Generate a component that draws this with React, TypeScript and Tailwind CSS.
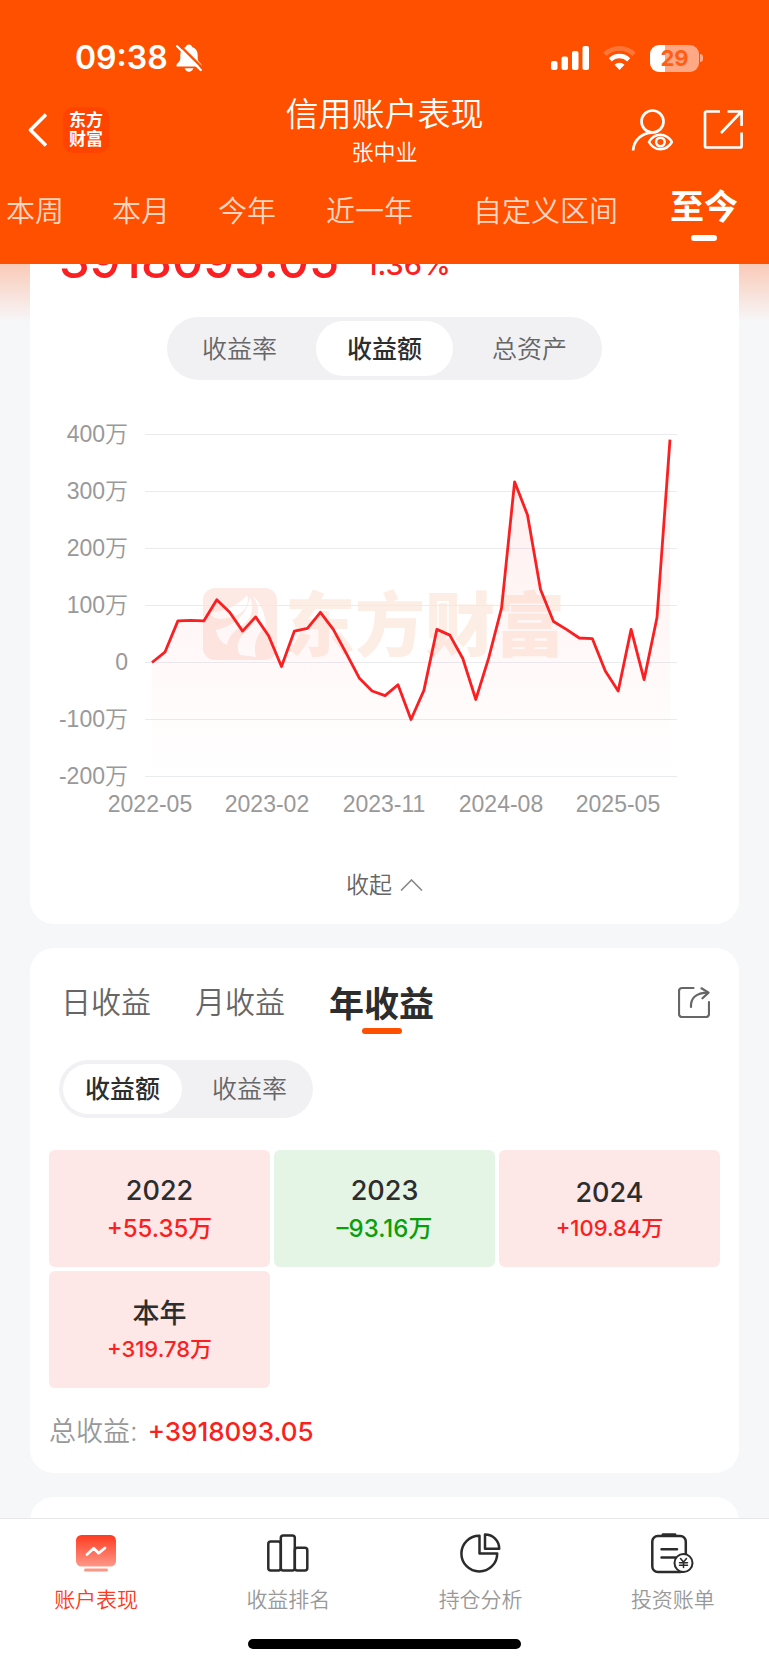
import { useState } from "react";

const PERIODS = [
  { label: "本周", space: "" },
  { label: "本月", space: "" },
  { label: "今年", space: "" },
  { label: "近一年", space: "ml-0.5" },
  { label: "自定义区间", space: "ml-3" },
  { label: "至今", space: "ml-1" },
];

const GRID = [400, 300, 200, 100, 0, -100, -200];
const MONTHS = ["2022-05", "2023-02", "2023-11", "2024-08", "2025-05"];
const SERIES = [
  0, 18, 73, 74, 73, 110, 88, 55, 80, 47, -7, 55, 60, 88, 58, 16, -27, -50, -58, -39, -100, -49, 58, 48, 7, -65, 8,
  96, 317, 259, 128, 72, 58, 43, 42, -15, -50, 58, -30, 79, 391,
];

const YEARS = [
  { year: "2022", value: "+55.35万", size: "text-[24px] leading-[38px]", tone: "bg-[#fde7e7] text-[#fb1f22]" },
  { year: "2023", value: "–93.16万", size: "text-[24px] leading-[38px]", tone: "bg-[#e4f4e5] text-[#0a9f0a]" },
  { year: "2024", value: "+109.84万", size: "text-[22px] leading-[33px]", tone: "bg-[#fde7e7] text-[#fb1f22]" },
  { year: "本年", value: "+319.78万", size: "text-[22px] leading-[33px]", tone: "bg-[#fde7e7] text-[#fb1f22]" },
];

function StatusBar() {
  return (
    <div className="flex h-[92px] items-center justify-between pt-6 pr-[66px] pl-[75px]">
      <div className="flex items-center gap-2">
        <span className="text-[32px] leading-10 font-semibold">09:38</span>
        <svg className="h-7 w-[26px]" viewBox="0 0 26 28" fill="none" aria-hidden="true">
          <path
            d="M13 0.5c-1.6 0-2.9 1-3.3 2.4C6.2 4 4.3 7 4.3 11v3.2c0 1.8-.8 3.2-2.2 4.5C1 19.800 .4 20.600 .4 21.400c0 .8.5 1.200 1.400 1.200h22.400c.9 0 1.400-.4 1.400-1.200 0-.8-.6-1.600-1.700-2.700-1.400-1.300-2.200-2.700-2.200-4.500V11c0-4-1.900-7-5.400-8.100C15.900 1.500 14.600.5 13 .5Z"
            fill="white"
          />
          <path d="M8.700 24.300h8.600c-.6 2.200-2.300 3.400-4.300 3.400s-3.700-1.200-4.300-3.400Z" fill="white" />
          <path d="M2.600 0.200 26.500 24" stroke="#ff5000" strokeWidth="2.400" />
          <path d="M1.100 2.200 24.800 26" stroke="white" strokeWidth="2.200" strokeLinecap="round" />
        </svg>
      </div>
      <div className="flex items-center gap-[14px]">
        <svg className="h-6 w-[38px]" viewBox="0 0 38 24" fill="white" aria-hidden="true">
          <rect x="0" y="15" width="6.500" height="9" rx="2" />
          <rect x="10.500" y="10.500" width="6.500" height="13.500" rx="2" />
          <rect x="21" y="5" width="6.500" height="19" rx="2" />
          <rect x="31.500" y="0" width="6.500" height="24" rx="2" />
        </svg>
        <svg className="h-6 w-[33px]" viewBox="0 0 33 24" fill="none" aria-hidden="true">
          <path d="M1.900 8.300a21 21 0 0 1 29.200 0" stroke="white" strokeOpacity=".22" strokeWidth="4.600" />
          <path d="M7.300 13.800a13.200 13.200 0 0 1 18.400 0" stroke="white" strokeWidth="4.400" />
          <path d="M11.500 18.700a7.300 7.300 0 0 1 10 0L16.500 24Z" fill="white" />
        </svg>
        <div className="flex items-center gap-px">
          <div className="flex h-[27px] w-[49px] items-center justify-center rounded-[9px] bg-[linear-gradient(to_right,white_15px,#ffa885_15px)] text-[22px] font-bold text-[#ff5f14]">
            29
          </div>
          <div className="h-2 w-[3px] rounded-r-full bg-[#ffa885]" />
        </div>
      </div>
    </div>
  );
}

function NavBar() {
  return (
    <div className="grid h-[76px] grid-cols-[1fr_auto_1fr] items-center px-[26px]">
      <div className="flex items-center gap-4">
        <button aria-label="返回">
          <svg className="h-[34px] w-[21px]" viewBox="0 0 21 34" fill="none" stroke="white" strokeWidth="3.600">
            <path d="M20 1.500 4.500 17 20 32.500" strokeLinejoin="round" />
          </svg>
        </button>
        <div className="flex h-[46px] w-[46px] flex-col items-center justify-center rounded-[10px] bg-[#ff4300] text-[17px] leading-[19px] font-bold">
          <span>东方</span>
          <span>财富</span>
        </div>
      </div>
      <div className="text-center">
        <h1 className="text-[33px] leading-[44px] font-[350]">信用账户表现</h1>
        <p className="text-[22px] leading-8 font-[350]">张中业</p>
      </div>
      <div className="flex items-center justify-end gap-[30px]">
        <button aria-label="查看账户">
          <svg className="h-[42px] w-[42px]" viewBox="0 0 42 42" fill="none" stroke="white" strokeWidth="2.700">
            <circle cx="21.500" cy="12.500" r="11" />
            <path d="M21.300 23.700C11 23.700 2.600 31.500 2.100 41.500" />
            <path
              d="M18 33c2.700-4.800 6.500-7.300 11.200-7.300S38.100 28.200 41 33c-2.900 4.800-7.100 7.300-11.800 7.300S20.700 37.800 18 33Z"
              fill="#ff5000"
              strokeWidth="2.500"
            />
            <circle cx="29.400" cy="33" r="4.300" strokeWidth="2.500" />
          </svg>
        </button>
        <button aria-label="分享">
          <svg className="h-[42px] w-[40px]" viewBox="0 0 40 42" fill="none" stroke="white" strokeWidth="2.700">
            <path d="M17 2.500H3.500A1.500 1.500 0 0 0 2 4v33a1.500 1.500 0 0 0 1.500 1.500h33.600a1.500 1.500 0 0 0 1.500-1.500V23.500" />
            <path d="M24.500 2.500h14.100V17M38 3 18 24" />
          </svg>
        </button>
      </div>
    </div>
  );
}

function PeriodTabs() {
  const [active, setActive] = useState("至今");
  return (
    <nav className="flex h-24 gap-12 pt-[21px] pl-[6px] whitespace-nowrap">
      {PERIODS.map((p) => (
        <button
          key={p.label}
          onClick={() => setActive(p.label)}
          className={`relative h-[46px] ${p.space} ${
            active === p.label ? "-mt-2 text-[34px] font-bold" : "text-[29px] font-[350] text-[#ffd6c2]"
          }`}
        >
          {p.label}
          {active === p.label && (
            <span className="absolute -bottom-[14px] left-1/2 h-[6px] w-[26px] -translate-x-1/2 rounded-full bg-white" />
          )}
        </button>
      ))}
    </nav>
  );
}

function Segmented({ items, initial, item }: { items: string[]; initial: string; item: string }) {
  const [active, setActive] = useState(initial);
  return (
    <div className="flex w-fit gap-2 rounded-full bg-[#f1f1f4] p-1">
      {items.map((label) => (
        <button
          key={label}
          onClick={() => setActive(label)}
          className={`rounded-full pt-0.5 text-[25px] ${item} ${
            active === label ? "bg-white font-medium text-[#2d2d2d]" : "font-[350] text-[#666]"
          }`}
        >
          {label}
        </button>
      ))}
    </div>
  );
}

function ProfitChart() {
  const left = 152;
  const step = 518 / (SERIES.length - 1);
  const zero = 663;
  const y = (v: number) => zero - v * 0.57;
  const line = SERIES.map((v, i) => `${(left + i * step).toFixed(1)},${(y(v) - 0.5).toFixed(1)}`).join(" ");
  return (
    <svg className="mt-5 block w-full" viewBox="30 400 709 440" role="img" aria-label="收益额走势">
      <defs>
        <linearGradient id="area" x1="0" y1="440" x2="0" y2="777" gradientUnits="userSpaceOnUse">
          <stop offset="0" stopColor="#ff2020" stopOpacity=".08" />
          <stop offset="1" stopColor="#ff2020" stopOpacity="0" />
        </linearGradient>
      </defs>
      <rect x="203" y="588" width="74" height="72" rx="12" fill="#fdeae4" />
      <path d="M210 612C224 612 238 606 247 595C251 608 240 618 219 619C214 618 211 616 210 612Z" fill="white" />
      <path
        d="M216 630C232 626 246 618 250 597C256 614 248 622 236 630C230 635 228 640 227 645C220 642 217 636 216 630Z"
        fill="white"
      />
      <path
        d="M253 596C262 610 259 620 245 632C237 640 236 648 240 655L256 657C253 645 256 636 266 625C265 612 260 602 253 596Z"
        fill="white"
      />
      <text x="285" y="651" fill="#fdeee5" fontSize="70" fontWeight="900">
        东方财富
      </text>
      {GRID.map((g) => (
        <g key={g}>
          <path d={`M145 ${Math.round(y(g)) - 0.5}H677`} stroke="#e9ebf0" strokeWidth="1.200" />
          <text
            x="128"
            y={y(g) + 7}
            textAnchor="end"
            fill="#999"
            fontSize="23"
            className="font-['Liberation_Sans','Noto_Sans_CJK_SC',sans-serif] font-[350]"
          >
            {g === 0 ? "0" : `${g}万`}
          </text>
        </g>
      ))}
      {MONTHS.map((m, i) => (
        <text
          key={m}
          x={150 + i * 117}
          y="812"
          textAnchor="middle"
          fill="#999"
          fontSize="23"
          className="font-['Liberation_Sans',sans-serif]"
        >
          {m}
        </text>
      ))}
      <polygon points={`152,777 ${line} 670,777`} fill="url(#area)" />
      <polyline points={line} fill="none" stroke="#fb1f22" strokeWidth="2.800" strokeLinejoin="round" />
    </svg>
  );
}

function PerformanceCard() {
  return (
    <section className="-mt-[51px] rounded-[24px] bg-white pt-[18px] pb-[22px]">
      <div className="flex items-end gap-[26px] pl-[29px] font-medium text-[#fb1f22]">
        <span className="text-[49px] leading-[60px]">3918093.05</span>
        <span className="pb-[5px] text-[29px] leading-[42px]">1.36%</span>
      </div>
      <div className="mt-[26px] flex justify-center">
        <Segmented items={["收益率", "收益额", "总资产"]} initial="收益额" item="h-[55px] w-[137px]" />
      </div>
      <ProfitChart />
      <button className="mx-auto mt-7 flex h-[34px] items-center gap-2 text-[23px] font-[350] text-[#666]">
        收起
        <svg className="h-3 w-[23px]" viewBox="0 0 23 12" fill="none" stroke="#888" strokeWidth="1.600">
          <path d="M1 11.500 11.500 1 22 11.500" />
        </svg>
      </button>
    </section>
  );
}

function YearlyCard() {
  const [tab, setTab] = useState("年收益");
  return (
    <section className="rounded-[24px] bg-white pt-[30px] pb-[23px]">
      <div className="flex items-center justify-between pr-[29px] pl-[31px]">
        <div className="flex gap-11">
          {["日收益", "月收益", "年收益"].map((t) => (
            <button
              key={t}
              onClick={() => setTab(t)}
              className={`relative h-12 ${
                tab === t ? "text-[35px] font-bold text-[#2d2d2d]" : "text-[30px] font-[350] text-[#666]"
              }`}
            >
              {t}
              {tab === t && (
                <span className="absolute -bottom-2 left-1/2 h-[6px] w-10 -translate-x-1/2 rounded-full bg-[#ff5000]" />
              )}
            </button>
          ))}
        </div>
        <button aria-label="分享收益">
          <svg className="h-8 w-8" viewBox="0 0 32 32" fill="none" stroke="#666" strokeWidth="2.200">
            <path
              d="M16 2H4.500a3 3 0 0 0-3 3v23a3 3 0 0 0 3 3h24a3 3 0 0 0 3-3V16"
              transform="translate(-.500)"
              strokeLinecap="round"
            />
            <path d="M13 21C12.500 12 18 6.800 30 6.600" strokeLinecap="round" />
            <path d="M23.500 2.300 30.500 6.600 24.500 12.300" strokeLinecap="round" strokeLinejoin="round" />
          </svg>
        </button>
      </div>
      <div className="mt-[34px] pl-[29px]">
        <Segmented items={["收益额", "收益率"]} initial="收益额" item="h-[50px] w-[119px]" />
      </div>
      <div className="mt-8 grid grid-cols-3 gap-1 px-[19px]">
        {YEARS.map((y) => (
          <button
            key={y.year}
            className={`flex h-[117px] flex-col items-center justify-center rounded-[6px] pt-0.5 font-medium ${y.tone}`}
          >
            <span className="text-[27px] leading-[38px] text-[#2d2d2d]">{y.year}</span>
            <span className={y.size}>{y.value}</span>
          </button>
        ))}
      </div>
      <p className="mt-[25px] flex gap-[10px] px-[19px] leading-[37px]">
        <span className="text-[27px] font-[350] text-[#999]">总收益:</span>
        <span className="text-[26px] font-medium text-[#fb1f22]">+3918093.05</span>
      </p>
    </section>
  );
}

function PerformanceIcon() {
  return (
    <svg className="h-11 w-11" viewBox="0 0 44 44" fill="none" aria-hidden="true">
      <defs>
        <linearGradient id="screen" x1="0" y1="4" x2="0" y2="36" gradientUnits="userSpaceOnUse">
          <stop stopColor="#ff3a20" />
          <stop offset="1" stopColor="#ff9a8a" />
        </linearGradient>
      </defs>
      <rect x="2" y="4" width="40" height="31.500" rx="5.500" fill="url(#screen)" />
      <rect x="10" y="37.500" width="24" height="3" rx="1.500" fill="#ff9585" />
      <path d="m13 23.500 6.700-6.300 5 5 6.300-5.200" stroke="white" strokeWidth="2.800" strokeLinecap="round" strokeLinejoin="round" />
    </svg>
  );
}

function RankIcon() {
  return (
    <svg className="h-11 w-11" viewBox="0 0 44 44" fill="none" stroke="#2b2b2b" strokeWidth="2.500" aria-hidden="true">
      <rect x="2.300" y="10.500" width="12.500" height="29" rx="2.500" />
      <rect x="14.800" y="4.500" width="14" height="35" rx="2.500" />
      <rect x="28.800" y="16.800" width="12.500" height="22.700" rx="2.500" />
    </svg>
  );
}

function PieIcon() {
  return (
    <svg className="h-11 w-11" viewBox="0 0 44 44" fill="none" stroke="#2b2b2b" strokeWidth="2.500" strokeLinejoin="round" aria-hidden="true">
      <path d="M20.500 4.700a17.900 17.900 0 1 0 17.700 17.800H20.500Z" />
      <path d="M26 3.500v14.300h14.200C40.200 9.500 34 3.500 26 3.500Z" />
    </svg>
  );
}

function BillIcon() {
  return (
    <svg className="h-11 w-11" viewBox="0 0 44 44" fill="none" stroke="#2b2b2b" strokeWidth="2.500" strokeLinecap="round" aria-hidden="true">
      <rect x="1.300" y="5" width="33.500" height="36" rx="5.500" />
      <path d="M12 3.600h12" strokeWidth="2.800" />
      <path d="M10.500 18.300H26M10.500 26.500h14" />
      <circle cx="32.500" cy="32" r="9" fill="white" strokeWidth="2" />
      <path d="m29.500 27.500 3 3.600 3-3.600M32.500 31.100v5.400M28.500 31.700h8M28.500 34.300h8" strokeWidth="1.500" />
    </svg>
  );
}

const FOOTER = [
  { label: "账户表现", Icon: PerformanceIcon, color: "text-[#ff3a20]" },
  { label: "收益排名", Icon: RankIcon, color: "text-[#999]" },
  { label: "持仓分析", Icon: PieIcon, color: "text-[#999]" },
  { label: "投资账单", Icon: BillIcon, color: "text-[#999]" },
];

export default function App() {
  return (
    <div className="flex h-screen flex-col bg-[#f6f7f9] font-['Inter','Noto_Sans_CJK_SC',sans-serif]">
      <header className="shrink-0 bg-[#ff5000] text-white">
        <StatusBar />
        <NavBar />
        <PeriodTabs />
      </header>
      <main className="flex min-h-0 flex-1 flex-col gap-6 overflow-hidden bg-[linear-gradient(to_bottom,#facab8,#f6f7f9_58px)] px-[30px]">
        <PerformanceCard />
        <YearlyCard />
        <section className="h-40 shrink-0 rounded-[24px] bg-white" />
      </main>
      <footer className="shrink-0 border-t border-[#e8e8ea] bg-white pt-3 pb-4">
        <nav className="grid grid-cols-4">
          {FOOTER.map(({ label, Icon, color }) => (
            <a key={label} href="#" className={`flex flex-col items-center gap-[10px] text-[21px] leading-[30px] font-[350] ${color}`}>
              <Icon />
              {label}
            </a>
          ))}
        </nav>
        <div className="mx-auto mt-6 h-[10px] w-[273px] rounded-full bg-black" />
      </footer>
    </div>
  );
}
